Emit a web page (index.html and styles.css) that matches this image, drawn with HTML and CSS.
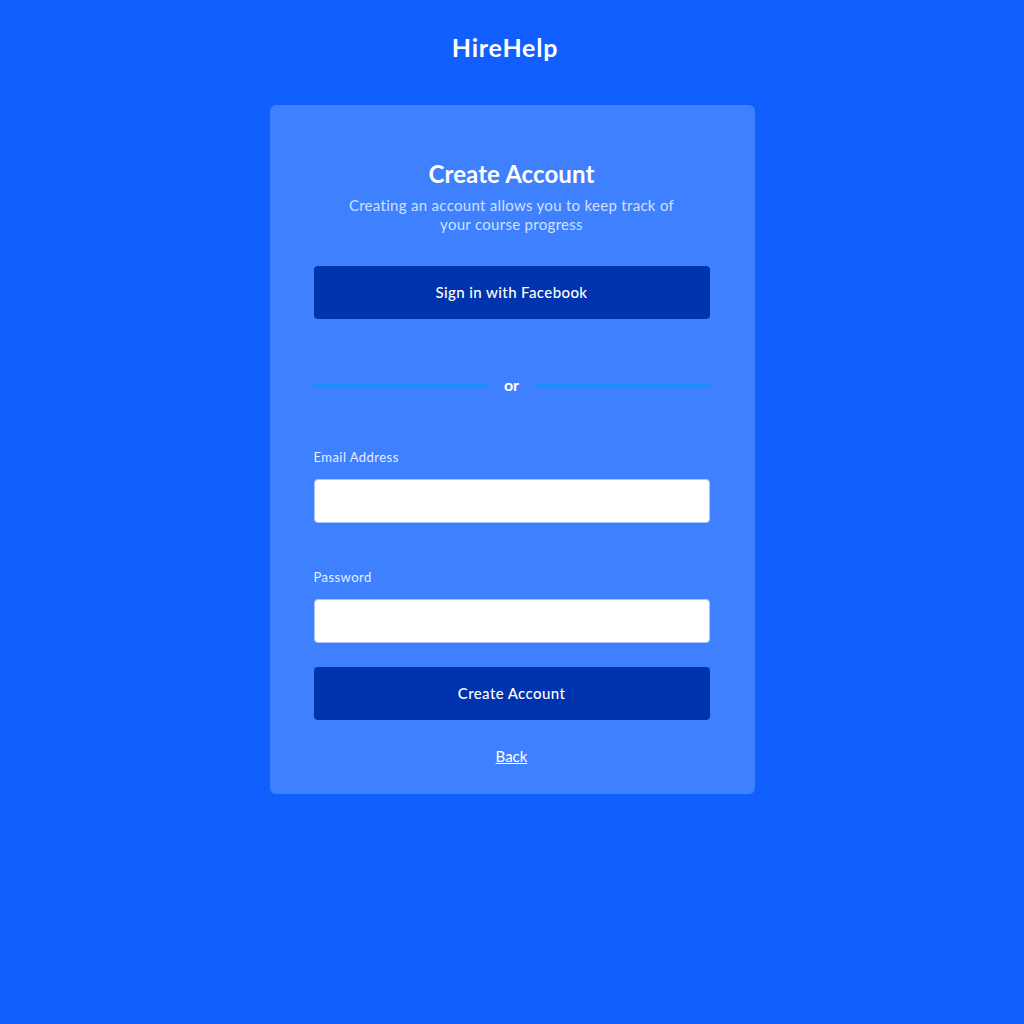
FILE: index.html
```html
<!DOCTYPE html>
<html lang="en">
<head>
<meta charset="utf-8">
<title>HireHelp - Create Account</title>
<link rel="stylesheet" href="styles.css">
</head>
<body>
<header class="top">
  <div class="logo">HireHelp</div>
</header>
<main class="card">
  <h1 class="title">Create Account</h1>
  <p class="subtitle">Creating an account allows you to keep track of<br>your course progress</p>
  <button class="btn btn-fb" type="button">Sign in with Facebook</button>
  <div class="divider"><span class="line"></span><span class="or">or</span><span class="line"></span></div>
  <form class="form">
    <label class="label" for="email">Email Address</label>
    <input class="input" id="email" type="email">
    <label class="label label-pw" for="pw">Password</label>
    <input class="input" id="pw" type="password">
    <button class="btn btn-create" type="button">Create Account</button>
  </form>
  <a class="back" href="#">Back</a>
</main>
</body>
</html>
```
FILE: styles.css
```css
* { box-sizing: border-box; }
body {
  margin: 0;
  background: #115fff;
  font-family: "Lato", "Open Sans", sans-serif;
  color: #fff;
  min-height: 1024px;
}
.top {
  padding-top: 33px;
  padding-right: 14px;
  display: flex;
  justify-content: center;
}
.logo {
  font-size: 25px;
  line-height: 28px;
  font-weight: 700;
  letter-spacing: 0.8px;
}
.card {
  width: 485px;
  margin: 44px auto 0;
  background: #3f80ff;
  border-radius: 6px;
  padding: 55px 45px 28px 44px;
  display: flex;
  flex-direction: column;
  align-items: stretch;
}
.title {
  margin: 0;
  text-align: center;
  font-size: 24px;
  line-height: 28px;
  font-weight: 700;
  letter-spacing: 0.1px;
}
.subtitle {
  margin: 8px 0 0;
  text-align: center;
  font-size: 15px;
  line-height: 19px;
  letter-spacing: 0.3px;
  color: #cfe0ff;
}
.btn {
  display: block;
  width: 100%;
  height: 53px;
  border: 0;
  border-radius: 4px;
  background: #0033ad;
  color: #fff;
  font-family: inherit;
  font-size: 15px;
  font-weight: 500;
  letter-spacing: 0.4px;
  cursor: pointer;
}
.btn-fb { margin-top: 32px; padding-bottom: 2px; }
.divider {
  margin-top: 56px;
  display: flex;
  align-items: center;
  gap: 14px;
  height: 20px;
}
.line {
  flex: 1;
  height: 3px;
  background: #1a8cff;
}
.or {
  font-size: 16px;
  line-height: 20px;
  font-weight: 700;
  padding: 0 2px;
}
.form {
  margin: 54px 0 0;
  display: flex;
  flex-direction: column;
}
.label {
  font-size: 13px;
  line-height: 16px;
  letter-spacing: 0.45px;
  color: #e6eeff;
}
.label-pw { margin-top: 46px; }
.input {
  margin-top: 14px;
  height: 44px;
  border: 1px solid #a9c6ff;
  border-radius: 4px;
  background: #fff;
  font-family: inherit;
  font-size: 15px;
  padding: 0 12px;
}
.btn-create { margin-top: 24px; padding-bottom: 2px; }
.back {
  margin-top: 26px;
  align-self: center;
  font-size: 15px;
  line-height: 20px;
  color: #fff;
  text-decoration: underline;
}
```
